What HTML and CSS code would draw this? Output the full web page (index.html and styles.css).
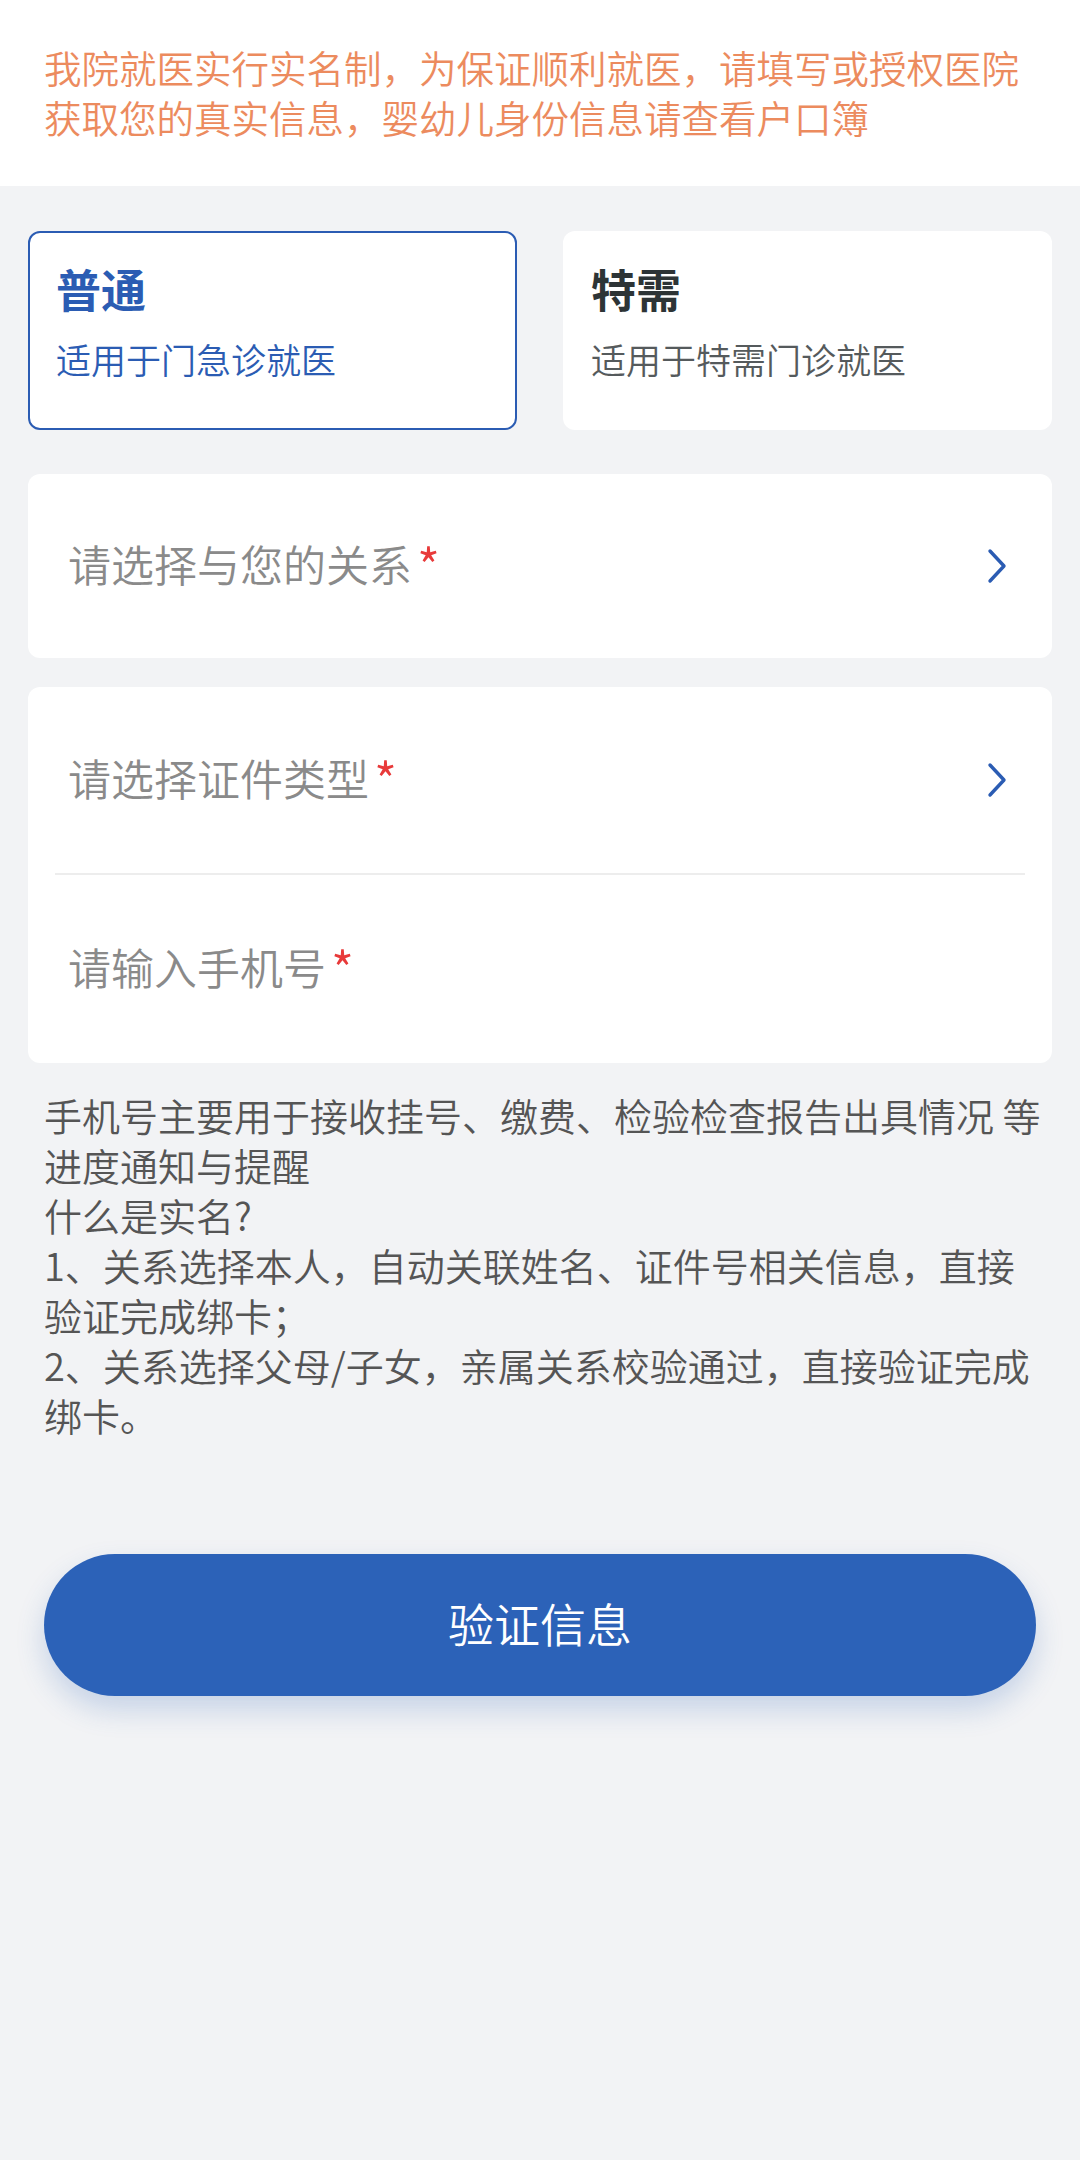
FILE: index.html
```html
<!DOCTYPE html>
<html lang="zh-CN">
<head>
<meta charset="utf-8">
<title>实名认证</title>
<link rel="stylesheet" href="styles.css">
</head>
<body>
<div class="notice">我院就医实行实名制，为保证顺利就医，请填写或授权医院获取您的真实信息，婴幼儿身份信息请查看户口簿</div>

<div class="types">
  <div class="type active">
    <div class="type-title">普通</div>
    <div class="type-sub">适用于门急诊就医</div>
  </div>
  <div class="type">
    <div class="type-title">特需</div>
    <div class="type-sub">适用于特需门诊就医</div>
  </div>
</div>

<div class="panel">
  <div class="row">
    <span class="label">请选择与您的关系<span class="req">*</span></span>
    <svg class="chev" viewBox="0 0 22 36" width="22" height="36"><path d="M4 3 L18 18 L4 33" fill="none" stroke="#2b5cb3" stroke-width="3.4" stroke-linecap="round" stroke-linejoin="round"/></svg>
  </div>
</div>

<div class="panel panel-gap">
  <div class="row">
    <span class="label">请选择证件类型<span class="req">*</span></span>
    <svg class="chev" viewBox="0 0 22 36" width="22" height="36"><path d="M4 3 L18 18 L4 33" fill="none" stroke="#2b5cb3" stroke-width="3.4" stroke-linecap="round" stroke-linejoin="round"/></svg>
  </div>
  <div class="divider"></div>
  <div class="row row-last">
    <span class="label">请输入手机号<span class="req">*</span></span>
  </div>
</div>

<div class="notes">
  <p>手机号主要用于接收挂号、缴费、检验检查报告出具情况 等进度通知与提醒</p>
  <p>什么是实名?</p>
  <p>1、关系选择本人，自动关联姓名、证件号相关信息，直接验证完成绑卡；</p>
  <p>2、关系选择父母/子女，亲属关系校验通过，直接验证完成绑卡。</p>
</div>

<div class="btn">验证信息</div>
</body>
</html>
```

FILE: styles.css
```css
html, body {
  margin: 0;
  padding: 0;
}
body {
  background: #f2f3f5;
  font-family: "Noto Sans CJK SC", "Noto Sans", sans-serif;
  min-height: 2160px;
}
.notice {
  background: #ffffff;
  color: #ec8b5e;
  font-size: 37.5px;
  line-height: 50px;
  padding: 42px 36px 44px 44px;
  font-weight: 350;
}
.types {
  display: grid;
  grid-template-columns: 1fr 1fr;
  gap: 46px;
  padding: 45px 28px 0 28px;
}
.type {
  background: #ffffff;
  border: 2px solid transparent;
  border-radius: 12px;
  padding: 31px 26px 44px 26px;
}
.type.active {
  border-color: #2b5cb3;
}
.type-title {
  font-size: 45px;
  line-height: 50px;
  font-weight: 700;
  color: #2d3436;
}
.type-sub {
  font-size: 35px;
  line-height: 50px;
  margin-top: 20px;
  color: #555a5c;
  font-weight: 350;
}
.type.active .type-title,
.type.active .type-sub {
  color: #2b5cb3;
}
.panel {
  background: #ffffff;
  border-radius: 12px;
  margin: 44px 28px 0 28px;
}
.panel-gap {
  margin-top: 29px;
}
.row {
  height: 184px;
  box-sizing: border-box;
  display: flex;
  align-items: center;
  justify-content: space-between;
  padding: 0 44px 4px 40px;
}
.panel-gap .row {
  height: 186px;
}
.panel-gap .row-last {
  height: 188px;
}
.label {
  font-size: 43px;
  line-height: 50px;
  color: #8a8a8a;
  font-weight: 350;
}
.req {
  color: #e83a3a;
  font-size: 50px;
  margin-left: 5px;
  vertical-align: top;
  line-height: 52px;
}
.chev {
  display: block;
  margin-top: 4px;
}
.divider {
  height: 2px;
  background: #ededed;
  margin: 0 27px;
}
.notes {
  margin-top: 27px;
  padding: 0 36px 0 44px;
  color: #555555;
  font-size: 38px;
  line-height: 50px;
  font-weight: 350;
}
.notes p {
  margin: 0;
}
.btn {
  margin: 114px 44px 0 44px;
  height: 142px;
  box-sizing: border-box;
  padding-bottom: 6px;
  border-radius: 71px;
  background: #2c62b8;
  color: #ffffff;
  font-size: 46px;
  font-weight: 350;
  display: flex;
  align-items: center;
  justify-content: center;
  box-shadow: 0 14px 28px rgba(44, 98, 184, 0.22);
}
```
